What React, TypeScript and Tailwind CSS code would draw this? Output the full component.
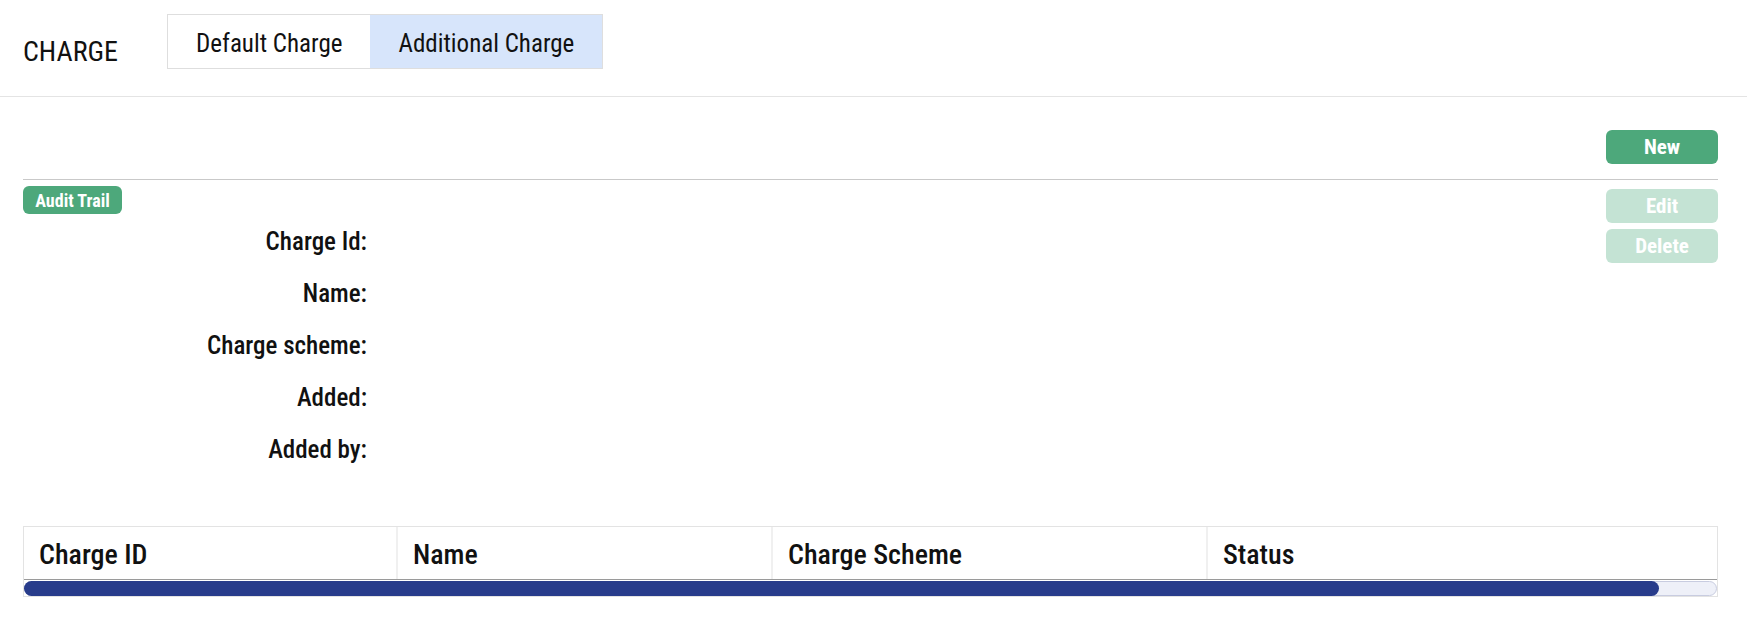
const labels = ["Charge Id:", "Name:", "Charge scheme:", "Added:", "Added by:"];
const cols = [
  { name: "Charge ID", w: "w-[374px]" },
  { name: "Name", w: "w-[375px]" },
  { name: "Charge Scheme", w: "w-[435px]" },
  { name: "Status", w: "flex-1" },
];

export default function App() {
  return (
    <div
      className="min-h-[619px] w-full bg-white text-[#111]"
      style={{ fontFamily: "'Roboto Condensed', 'Liberation Sans Narrow', Roboto, sans-serif" }}
    >
      {/* Header */}
      <div className="flex h-[97px] items-start border-b border-[#e4e4e4] pl-[23px]">
        <div className="mt-[38px] w-[144px] text-[28px] leading-[28px]">CHARGE</div>
        <div className="mt-[14px] flex h-[55px] border border-[#dedede]">
          <div className="flex h-full items-center bg-white px-[28px] pt-[4px] text-[25px]">Default Charge</div>
          <div className="flex h-full items-center bg-[#d7e5fb] px-[28px] pt-[4px] text-[25px]">Additional Charge</div>
        </div>
      </div>

      {/* Main */}
      <div className="pl-[23px] pr-[29px] pt-[33px]">
        <div className="flex justify-end">
          <button className="h-[34px] w-[112px] rounded-[6px] bg-[#4da87b] text-[21px] font-bold leading-none text-white">
            New
          </button>
        </div>
        <div className="mt-[15px] border-t border-[#c9c9c9]" />
        <div className="flex justify-between">
          <div className="pt-[6px]">
            <div className="flex h-[28px] w-[99px] items-center justify-center rounded-[6px] bg-[#4da87b] text-[18px] font-bold text-white">
              Audit Trail
            </div>
            <div className="mt-[2px]">
              {labels.map((l) => (
                <div key={l} className="h-[52px] w-[344px] text-right text-[25px] font-medium leading-[52px]">
                  {l}
                </div>
              ))}
            </div>
          </div>
          <div className="flex flex-col gap-[6px] pt-[9px]">
            <button className="h-[34px] w-[112px] rounded-[6px] bg-[#c4e3d4] text-[21px] font-bold leading-none text-white">
              Edit
            </button>
            <button className="h-[34px] w-[112px] rounded-[6px] bg-[#c4e3d4] text-[21px] font-bold leading-none text-white">
              Delete
            </button>
          </div>
        </div>

        {/* Table */}
        <div className="mt-[50px] border border-[#e3e3e3]">
          <div className="flex h-[53px] border-b border-[#9a9a9a]">
            {cols.map((c, i) => (
              <div
                key={c.name}
                className={`${c.w} flex items-center px-[15px] pt-[3px] text-[28px] font-medium ${
                  i < cols.length - 1 ? "border-r-2 border-[#f0f0f0]" : ""
                }`}
              >
                {c.name}
              </div>
            ))}
          </div>
          <div className="pt-[1px]">
            <div className="relative h-[15px] rounded-full border border-[#c8cce0] bg-[#eef0f8]">
              <div className="absolute -left-px -top-px h-[15px] w-[calc(100%-56px)] rounded-full bg-[#283c8b]" />
            </div>
          </div>
        </div>
      </div>
    </div>
  );
}
